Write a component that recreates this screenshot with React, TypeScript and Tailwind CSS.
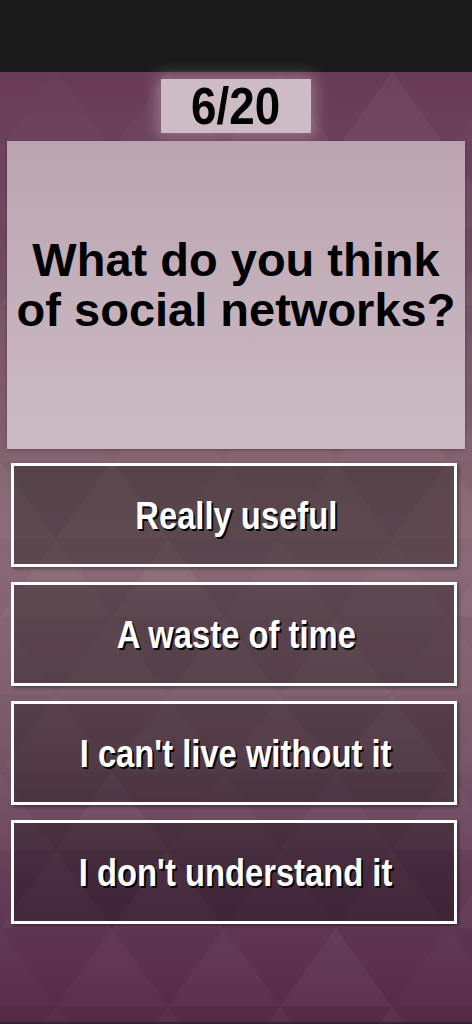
import React from "react";

const answers = [
  "Really useful",
  "A waste of time",
  "I can't live without it",
  "I don't understand it",
];

function TrianglePattern() {
  const rows = 13;
  const w = 112;
  const h = 78;
  const polys: React.ReactNode[] = [];
  for (let r = 0; r < rows; r++) {
    const off = r % 2 === 0 ? 0 : w / 2;
    for (let c = -1; c < 6; c++) {
      const x = c * w + off;
      const y = r * h;
      const up = `${x},${y + h} ${x + w / 2},${y} ${x + w},${y + h}`;
      const down = `${x + w / 2},${y} ${x + w},${y + h} ${x + (3 * w) / 2},${y}`;
      const a = ((r * 7 + c * 13) % 4) / 100;
      const b = ((r * 11 + c * 5) % 3) / 100;
      polys.push(
        <polygon key={`u${r}-${c}`} points={up} fill="#ffffff" fillOpacity={0.01 + a * 0.8} />
      );
      polys.push(
        <polygon key={`d${r}-${c}`} points={down} fill="#000000" fillOpacity={0.005 + b * 0.8} />
      );
    }
  }
  return (
    <svg
      className="absolute inset-0 h-full w-full"
      viewBox="0 0 472 952"
      preserveAspectRatio="none"
    >
      {polys}
    </svg>
  );
}

export default function App() {
  return (
    <div
      className="flex h-[1024px] w-[472px] flex-col overflow-hidden bg-[#1b1b1b]"
      style={{ fontFamily: '"Liberation Sans", Arial, sans-serif' }}
    >
      <div className="h-[72px] shrink-0 bg-[#1b1b1b]" />
      <div className="relative flex h-[950px] flex-col bg-[linear-gradient(180deg,#6a3b57_0%,#6e4760_15%,#83646f_42%,#8a6a77_52%,#7c5a6b_70%,#653e58_85%,#582a48_100%)]">
        <TrianglePattern />
        <div className="relative flex flex-col">
          <div className="mt-[7px] flex justify-center">
            <div className="flex h-[54px] w-[150px] items-center justify-center bg-[#cdbcc6] shadow-[0_0_14px_4px_rgba(255,255,255,0.28)]">
              <span className="inline-block scale-x-[0.88] text-[52px] leading-none font-bold text-black">
                6/20
              </span>
            </div>
          </div>
          <div className="mx-[7px] mt-[8px] flex h-[308px] items-center justify-center bg-[linear-gradient(180deg,#baa4b1_0%,#c4b0bb_50%,#cbbac3_100%)] pb-[20px] shadow-[0_1px_3px_rgba(0,0,0,0.25)]">
            <p className="text-center text-[47px] leading-[50px] font-bold text-black">
              What do you think
              <br />
              of social networks?
            </p>
          </div>
          <div className="mt-[14px] mr-[15px] ml-[11px] flex flex-col gap-[15px]">
            {answers.map((a) => (
              <div
                key={a}
                className="flex h-[104px] items-center justify-center border-[3px] border-white bg-[rgba(0,0,0,0.32)] pl-[4px] shadow-[2px_2px_3px_rgba(0,0,0,0.35)]"
              >
                <span className="inline-block scale-x-[0.84] text-[39px] leading-none font-bold whitespace-nowrap text-white [text-shadow:2px_2px_0_#000]">
                  {a}
                </span>
              </div>
            ))}
          </div>
        </div>
      </div>
      <div className="h-[2px] bg-[#2a2a2a]" />
    </div>
  );
}
